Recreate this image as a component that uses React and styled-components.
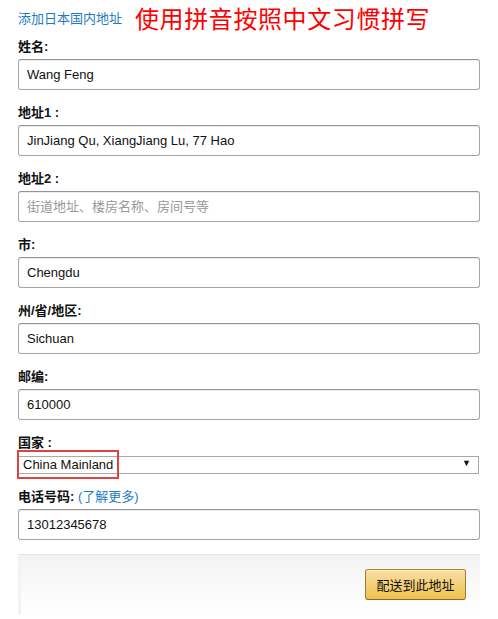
import styled, { createGlobalStyle } from 'styled-components'

const GlobalStyle = createGlobalStyle`
  body {
    margin: 0;
    background: #fff;
    font-family: "Liberation Sans", Arial, "Noto Sans CJK SC", sans-serif;
    color: #111;
  }
`

const Page = styled.div`
  width: 462px;
  padding: 0 0 0 18px;
`

const Header = styled.div`
  display: flex;
  align-items: flex-start;
  gap: 13px;
  height: 37px;
`

const AddLink = styled.a`
  margin-top: 9px;
  font-size: 13px;
  line-height: 19px;
  color: #1f7bbf;
  text-decoration: none;
`

const Note = styled.span`
  font-family: "Noto Sans CJK SC", sans-serif;
  font-size: 24px;
  letter-spacing: 0.6px;
  color: #f00;
  line-height: 36px;
`

const Field = styled.div`
  display: flex;
  flex-direction: column;
  gap: 3px;
  margin-bottom: ${(p) => p.$gap || 13}px;
`

const Label = styled.label`
  font-size: 13px;
  font-weight: bold;
  line-height: 19px;
  color: #111;
`

const More = styled.a`
  font-weight: normal;
  color: #1f7bbf;
  text-decoration: none;
`

const Input = styled.input`
  box-sizing: border-box;
  width: 462px;
  height: 31px;
  padding: 3px 8px;
  font-family: "Liberation Sans", Arial, "Noto Sans CJK SC", sans-serif;
  font-size: 13px;
  color: #111;
  border: 1px solid #a6a6a6;
  border-top-color: #949494;
  border-radius: 3px;
  box-shadow: 0 1px 0 rgba(255, 255, 255, 0.5), 0 1px 0 rgba(0, 0, 0, 0.07) inset;
  outline: none;

  &::placeholder {
    color: #999;
  }
`

const SelectWrap = styled.div`
  position: relative;
  width: 461px;
  height: 18px;

  &::after {
    content: '▼';
    position: absolute;
    right: 8px;
    top: 3px;
    font-size: 9px;
    color: #111;
    pointer-events: none;
  }
`

const Select = styled.select`
  appearance: none;
  box-sizing: border-box;
  width: 100%;
  height: 18px;
  padding: 0 0 0 4px;
  font-family: "Liberation Sans", Arial, sans-serif;
  font-size: 13px;
  color: #111;
  background: #fff;
  border: 1px solid #a9a9a9;
  border-radius: 0;
  outline: none;
`

const Highlight = styled.span`
  position: absolute;
  left: -1px;
  top: -5px;
  width: 102px;
  height: 29px;
  box-sizing: border-box;
  border: 2px solid #e0433f;
  pointer-events: none;
`

const Footer = styled.div`
  display: flex;
  justify-content: flex-end;
  width: 462px;
  box-sizing: border-box;
  padding: 14px 14px 15px;
  border-top: 1px solid #e3e3e3;
  border-left: 3px solid #f3f3f3;
  background: linear-gradient(to bottom, #f3f3f3, #fff);
`

const Button = styled.button`
  width: 101px;
  height: 31px;
  font-family: "Liberation Sans", Arial, "Noto Sans CJK SC", sans-serif;
  font-size: 13px;
  color: #111;
  background: linear-gradient(to bottom, #f7dfa5, #f0c14b);
  border: 1px solid;
  border-color: #a88734 #9c7e31 #846a29;
  border-radius: 3px;
  box-shadow: 0 1px 0 rgba(255, 255, 255, 0.4) inset;
  cursor: pointer;
`

const fields = [
  { label: '姓名:', value: 'Wang Feng' },
  { label: '地址1 :', value: 'JinJiang Qu, XiangJiang Lu, 77 Hao' },
  { label: '地址2 :', placeholder: '街道地址、楼房名称、房间号等' },
  { label: '市:', value: 'Chengdu' },
  { label: '州/省/地区:', value: 'Sichuan' },
  { label: '邮编:', value: '610000' },
]

export default function App() {
  return (
    <>
      <GlobalStyle />
      <Page>
        <Header>
          <AddLink href="#">添加日本国内地址</AddLink>
          <Note>使用拼音按照中文习惯拼写</Note>
        </Header>
        {fields.map((f) => (
          <Field key={f.label}>
            <Label>{f.label}</Label>
            <Input defaultValue={f.value} placeholder={f.placeholder} />
          </Field>
        ))}
        <Field $gap={14}>
          <Label>国家 :</Label>
          <SelectWrap>
            <Select defaultValue="cn">
              <option value="cn">China Mainland</option>
            </Select>
            <Highlight />
          </SelectWrap>
        </Field>
        <Field $gap={14}>
          <Label>
            电话号码: <More href="#">(了解更多)</More>
          </Label>
          <Input defaultValue="13012345678" />
        </Field>
        <Footer>
          <Button>配送到此地址</Button>
        </Footer>
      </Page>
    </>
  )
}
